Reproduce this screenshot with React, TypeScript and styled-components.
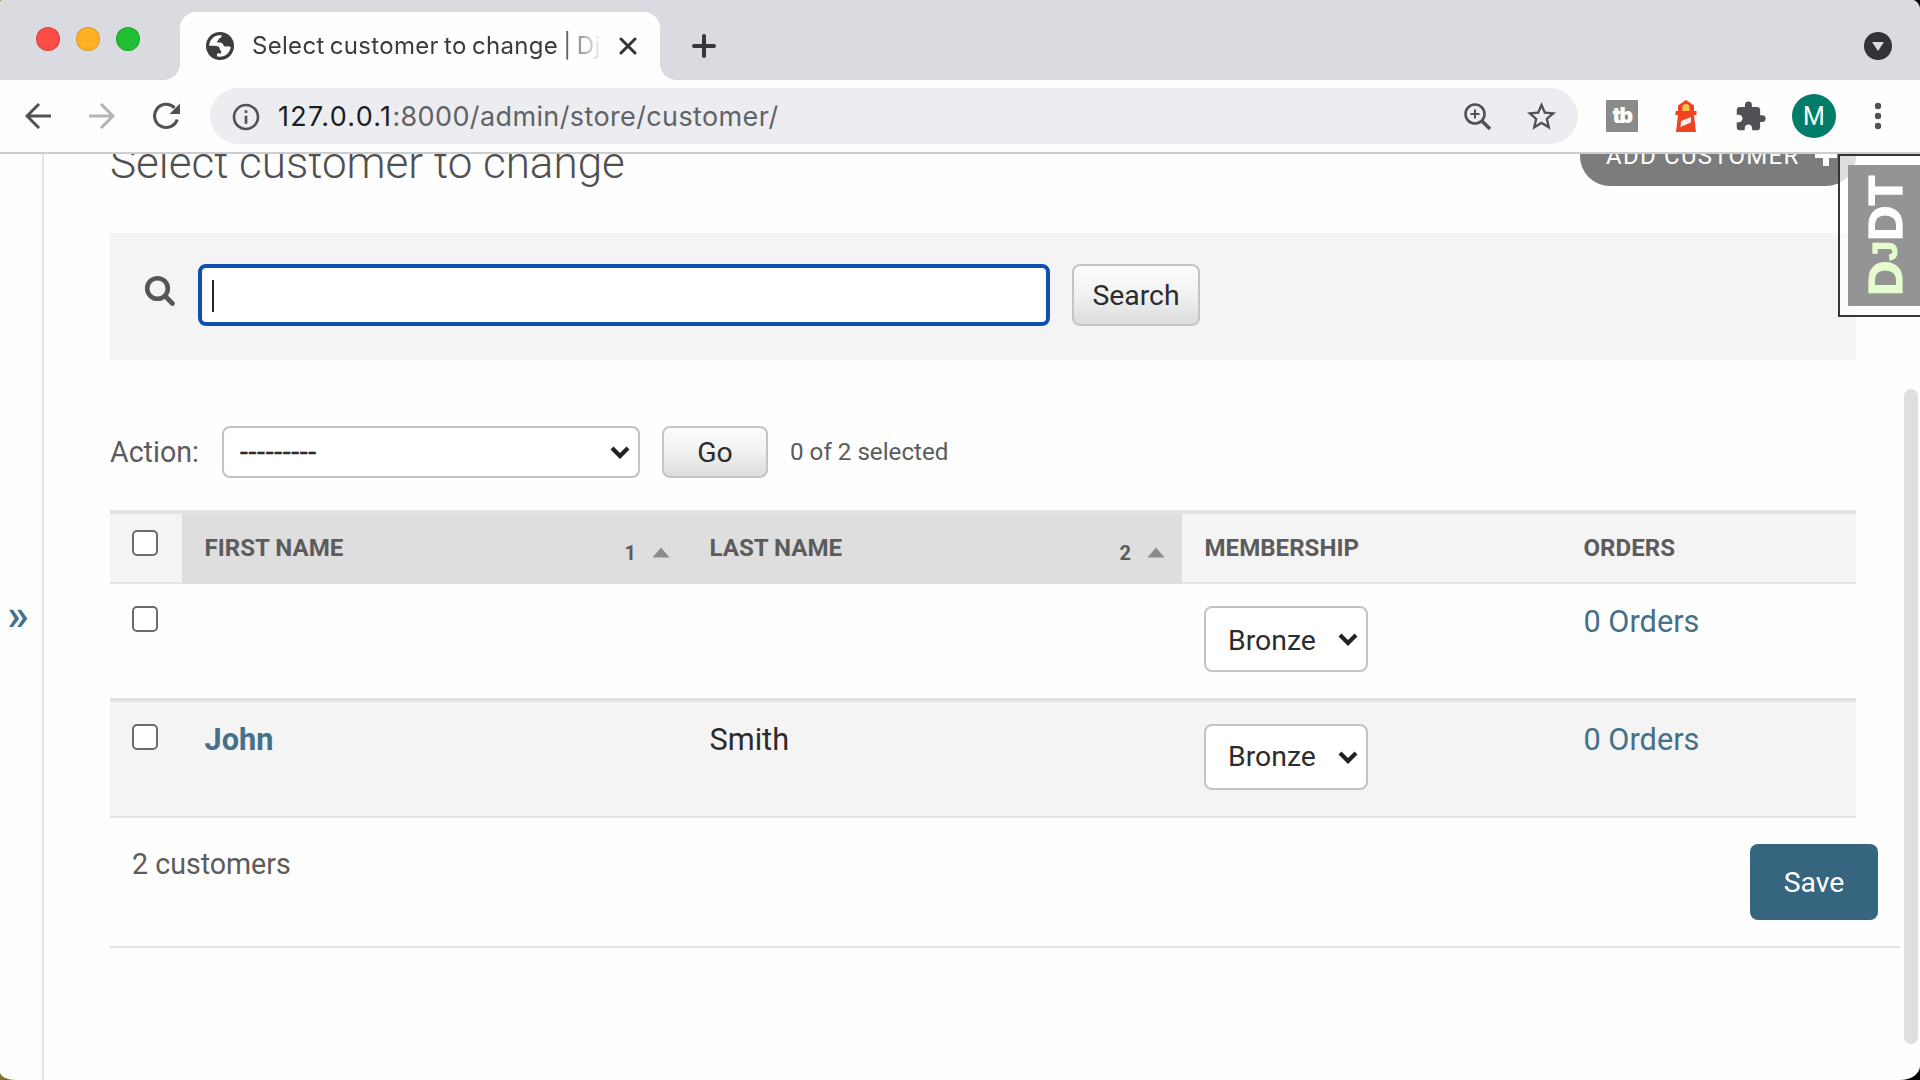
import React from "react";
import styled, { createGlobalStyle, css } from "styled-components";
import { MdExtension, MdInfoOutline, MdStarBorder } from "react-icons/md";

const Global = createGlobalStyle`
  html, body { margin: 0; padding: 0; }
  *, *::before, *::after { box-sizing: border-box; }
  body {
    height: 1080px;
    overflow: hidden;
    background: linear-gradient(90deg, #7b7030 0 50%, #050608 50% 100%);
    font-family: Roboto, "Liberation Sans", sans-serif;
  }
  button, select, input { font-family: inherit; }
`;

const Window = styled.div`
  width: 1920px;
  height: 1080px;
  display: flex;
  flex-direction: column;
  overflow: hidden;
  background: #fefefe;
  border-radius: 3px 8px 20px 16px / 3px 10px 14px 8px;
`;

/* ---------- browser chrome ---------- */

const TabStrip = styled.div`
  height: 80px;
  flex: none;
  display: flex;
  align-items: flex-end;
  background: #dadbe0;
`;

const Lights = styled.div`
  align-self: flex-start;
  display: flex;
  gap: 16px;
  width: 180px;
  padding: 27px 0 0 36px;
`;

const Light = styled.span<{ $color: string }>`
  width: 24px;
  height: 24px;
  border-radius: 50%;
  border: 1px solid rgba(0, 0, 0, 0.14);
  background: ${(p) => p.$color};
`;

const Tab = styled.div`
  position: relative;
  width: 480px;
  height: 68px;
  display: flex;
  align-items: center;
  padding: 0 23px 0 26px;
  border-radius: 16px 16px 0 0;
  background: #fefefe;
  color: #3c3d40;

  &::before,
  &::after {
    content: "";
    position: absolute;
    bottom: 0;
    width: 16px;
    height: 16px;
  }
  &::before {
    left: -16px;
    background: radial-gradient(circle at 0 0, transparent 15.5px, #fefefe 16px);
  }
  &::after {
    right: -16px;
    background: radial-gradient(circle at 100% 0, transparent 15.5px, #fefefe 16px);
  }
`;

const TabTitle = styled.span`
  flex: 1;
  margin-left: 18px;
  margin-right: 15px;
  overflow: hidden;
  white-space: nowrap;
  font: 400 24px/32px Inter, "Liberation Sans", sans-serif;
  letter-spacing: 0.3px;
  word-spacing: -1.8px;
  color: #3a3b3e;
  mask-image: linear-gradient(90deg, #000 calc(100% - 46px), transparent calc(100% - 1px));
`;

const NewTab = styled.div`
  align-self: center;
  margin: 12px auto 0 32px;
  display: flex;
`;

const TabSearch = styled.div`
  align-self: center;
  margin: 12px 28px 0 0;
  display: flex;
`;

const Toolbar = styled.div`
  height: 74px;
  flex: none;
  display: flex;
  align-items: center;
  border-bottom: 2px solid #cdcecf;
  background: #fefefe;
  color: #505256;
`;

const NavButtons = styled.div`
  width: 210px;
  display: flex;
  align-items: center;
  gap: 38px;
  padding-left: 25px;
`;

const AddressBar = styled.div`
  width: 1368px;
  height: 56px;
  display: flex;
  align-items: center;
  padding: 1px 19px 0 20px;
  border-radius: 28px;
  background: #ecedf1;
`;

const Url = styled.span`
  flex: 1;
  margin-left: 16px;
  font: 400 27px/36px Inter, "Liberation Sans", sans-serif;
  letter-spacing: 0.38px;
  color: #606266;
  b {
    font-weight: 400;
    letter-spacing: 1.3px;
    color: #1c1d20;
  }
`;

const AddressIcons = styled.div`
  display: flex;
  align-items: center;
  gap: 32px;
`;

const Extensions = styled.div`
  display: flex;
  align-items: center;
  gap: 37px;
  margin-left: 28px;
`;

const BuddyBadge = styled.span`
  width: 32px;
  height: 32px;
  display: flex;
  align-items: center;
  justify-content: center;
  padding-bottom: 1px;
  background: #8a8a8a;
  color: #fff;
  font: 900 21px/31px Inter, sans-serif;
  letter-spacing: -1.6px;
`;

const Avatar = styled.span`
  width: 44px;
  height: 44px;
  margin: 0 1px 0 -12px;
  border-radius: 50%;
  background: #007c69;
  color: #f2fffc;
  text-align: center;
  font: 400 25px/45px Roboto, sans-serif;
`;

/* ---------- page ---------- */

const Page = styled.div`
  position: relative;
  flex: 1;
  min-height: 0;
  display: flex;
  overflow: hidden;
`;

const NavToggle = styled.div`
  width: 44px;
  flex: none;
  padding: 441px 0 0 7px;
  border-right: 2px solid #e4e4e4;
  color: #44708c;
  font-size: 45px;
  font-weight: 500;
  line-height: 40px;
`;

const Main = styled.main`
  width: 1856px;
  padding-left: 66px;
`;

const TitleRow = styled.div`
  height: 79px;
  display: flex;
  justify-content: space-between;
  width: 1746px;
`;

const Title = styled.h1`
  margin: -17px 0 0;
  height: 52px;
  font-weight: 300;
  font-size: 44px;
  line-height: 52px;
  color: #505050;
  white-space: nowrap;
`;

const AddButton = styled.a`
  width: 276px;
  height: 63px;
  margin-top: -31px;
  display: flex;
  align-items: center;
  padding-left: 26px;
  gap: 16px;
  border-radius: 30px;
  background: #7c7c7c;
  color: #fff;
  font-size: 24px;
  line-height: 28px;
  letter-spacing: 1.25px;
  white-space: nowrap;
  span { margin-top: 2px; }
`;

const SearchPanel = styled.form`
  width: 1746px;
  height: 127px;
  display: flex;
  align-items: flex-start;
  padding: 31px 0 0 34px;
  background: #f4f4f4;
  svg { margin-top: 11px; }
`;

const SearchField = styled.div`
  width: 852px;
  height: 62px;
  margin-left: 22px;
  padding: 12px 0 0 10px;
  border: 4px solid #0d50b2;
  border-radius: 8px;
  background: #fff;
`;

const Caret = styled.span`
  display: block;
  width: 2px;
  height: 32px;
  background: #222;
`;

const Button = styled.button<{ $w: number; $h: number }>`
  width: ${(p) => p.$w}px;
  height: ${(p) => p.$h}px;
  margin: 0 0 0 22px;
  padding: 1px 0 0;
  border: 2px solid #c4c4c4;
  border-radius: 8px;
  background: linear-gradient(#fcfcfc, #f3f3f3 45%, #dcdcdc);
  color: #2c2c2c;
  font-size: 28.4px;
  line-height: 34px;
`;

const Actions = styled.div`
  height: 52px;
  margin-top: 66px;
  display: flex;
  align-items: center;
  color: #5c5c5c;
  font-size: 28.6px;
`;

const ActionLabel = styled.label`
  width: 112px;
`;

const Select = styled.div<{ $w: number; $h: number; $inline?: boolean }>`
  width: ${(p) => p.$w}px;
  height: ${(p) => p.$h}px;
  display: flex;
  align-items: center;
  justify-content: space-between;
  padding: ${(p) => (p.$inline ? "0 8px 0 22px" : "0 8px 0 16px")};
  border: 2px solid #c3c3c3;
  border-radius: 8px;
  background: #fff;
  color: #2c2c2c;
  font-size: 28.4px;
  line-height: 32px;
`;

const Dashes = styled.span`
  letter-spacing: 0.7px;
  -webkit-text-stroke: 0.5px currentColor;
`;

const Counter = styled.span`
  margin-left: 22px;
  font-size: 24.2px;
`;

const Table = styled.div`
  width: 1746px;
  margin-top: 32px;
`;

const columns = css`
  display: grid;
  grid-template-columns: 72px 505px 495px 379px 295px;
`;

const HeadRow = styled.div`
  ${columns};
  height: 74px;
  border-top: 4px solid #e2e2e2;
  border-bottom: 2px solid #e4e4e4;
  background: #f4f4f4;
`;

const HeadCell = styled.div<{ $sorted?: boolean }>`
  display: flex;
  justify-content: space-between;
  padding: 18px 17px 0 22.5px;
  margin-bottom: ${(p) => (p.$sorted ? "-2px" : 0)};
  background: ${(p) => (p.$sorted ? "#dedede" : "transparent")};
  color: #5c5c5c;
  font-weight: 700;
  font-size: 24.1px;
  line-height: 32px;
`;

const SortInfo = styled.span`
  display: flex;
  align-items: center;
  gap: 16px;
  height: 24px;
  margin-top: 9px;
  font-size: 20px;
  svg { margin-bottom: 1px; }
`;

const Row = styled.div<{ $alt?: boolean }>`
  ${columns};
  height: ${(p) => (p.$alt ? 120 : 114)}px;
  border-top: ${(p) => (p.$alt ? "4px solid #e3e3e3" : "0")};
  border-bottom: ${(p) => (p.$alt ? "2px solid #e4e4e4" : "0")};
  background: ${(p) => (p.$alt ? "#f4f4f4" : "transparent")};
`;

const Cell = styled.div<{ $link?: boolean; $bold?: boolean; $flush?: boolean }>`
  padding: 22px 0 0 ${(p) => (p.$flush ? 22 : 22.5)}px;
  color: ${(p) => (p.$link ? "#447089" : "#2c2c2c")};
  font-size: 30.7px;
  line-height: 32px;
  font-weight: ${(p) => (p.$bold ? 700 : 400)};
`;

const Membership = styled.span<{ $drop?: boolean }>`
  padding-top: ${(p) => (p.$drop ? 3 : 0)}px;
`;

const Checkbox = styled.span`
  display: block;
  flex: none;
  width: 26px;
  height: 26px;
  border: 2px solid #6b6b6b;
  border-radius: 5px;
  background: #fff;
`;

const CheckHead = styled.div`
  padding: 16px 0 0 22px;
`;

const Footer = styled.div`
  width: 1790px;
  height: 130px;
  display: flex;
  justify-content: space-between;
  align-items: flex-start;
  padding: 26px 22px 0;
  border-bottom: 2px solid #e2e2e2;
  color: #5c5c5c;
  font-size: 28.6px;
`;

const Total = styled.span`
  margin-top: 3px;
  line-height: 34px;
`;

const Save = styled.button`
  width: 128px;
  height: 76px;
  padding: 1px 0 0;
  border: 0;
  border-radius: 8px;
  background: #36667f;
  color: #fff;
  font-size: 28.4px;
  line-height: 34px;
`;

const DebugHandle = styled.div`
  position: absolute;
  top: 0;
  right: -2px;
  width: 84px;
  height: 163px;
  padding: 9px 0 9px 8px;
  border: 2px solid rgba(20, 20, 20, 0.85);
  background: rgba(255, 255, 255, 0.75);
`;

const DebugLabel = styled.div`
  height: 141px;
  display: flex;
  align-items: center;
  justify-content: center;
  background: #949494;
  writing-mode: vertical-rl;
  transform: rotate(180deg);
  color: #fff;
  font: 700 49px/74px "Liberation Sans", Arial, sans-serif;
  padding-left: 6px;
  -webkit-text-stroke: 1.2px currentColor;
  span { color: #e6fbce; }
  small { font-size: 35px; }
`;

const Scrollbar = styled.div`
  position: absolute;
  top: 235px;
  right: 2px;
  width: 14px;
  height: 655px;
  border-radius: 7px;
  background: #dfdfdf;
`;

const Chevron = () => (
  <svg width="20" height="13" viewBox="0 0 20 13" fill="none" stroke="#222" strokeWidth="4.2">
    <path d="M2 2 L10 10 L18 2" />
  </svg>
);

const SortArrow = () => (
  <svg width="18" height="11" viewBox="0 0 18 11">
    <path d="M9 0.5 L17.5 10.5 H0.5 Z" fill="#8b8b8b" />
  </svg>
);

const Arrow = ({ flip, color }: { flip?: boolean; color: string }) => (
  <svg width="26" height="26" viewBox="0 0 26 26" fill="none" stroke={color} strokeWidth="3"
    transform={flip ? "scale(-1 1)" : undefined}>
    <path d="M26 13 H2 M14 1 L2 13 L14 25" />
  </svg>
);

const Globe = () => (
  <svg width="28" height="28" viewBox="0 0 28 28">
    <circle cx="14" cy="14" r="14" fill="#3c3d40" />
    <path
      d="M3.2 13.8 C3.2 8 8 3.2 13.8 3.2 L15.6 3.3 C15.8 5 15.2 6 13.6 6.2 C12.4 6.4 12.6 8.8 11.2 9.2 C10.4 9.6 11.2 10.8 12.6 10.6 C15 10.4 16.6 11 17.2 12.6 C17.8 14.6 19 14.8 20.6 14.4 C22 14 23.4 14.2 24.8 15 C24 20.5 19.6 24.8 13.8 24.8 L11 24.4 V21.6 H14.2 C15.6 21.4 15.6 19.4 14.4 18.2 C13 17 14.4 15.2 12 14.4 C10 13.8 6 14.2 3.2 13.8 Z"
      fill="#fefefe"
    />
  </svg>
);

const Lighthouse = () => (
  <svg width="22" height="32" viewBox="0 0 22 32">
    <path d="M11 0 L19 5.5 V11 H21.5 V15 H19 L21 32 H1 L3 15 H0.5 V11 H3 V5.5 Z" fill="#ee4422" />
    <path d="M7.5 11 V7.5 A3.5 3.5 0 0 1 14.5 7.5 V11 Z" fill="#fdc04f" />
    <path d="M6 21 L16 17 V22.5 L5.5 27 Z" fill="#f7e9e6" />
  </svg>
);

const customers = [
  { first: "", last: "" },
  { first: "John", last: "Smith" },
];

export default function App() {
  return (
    <Window>
      <Global />
      <TabStrip>
        <Lights>
          <Light $color="#fc4c48" />
          <Light $color="#fdb024" />
          <Light $color="#1fbe33" />
        </Lights>
        <Tab>
          <Globe />
          <TabTitle>Select customer to change | Django site admin</TabTitle>
          <svg width="18" height="18" viewBox="0 0 18 18" stroke="#333438" strokeWidth="3" strokeLinecap="round">
            <path d="M2 2 L16 16 M16 2 L2 16" />
          </svg>
        </Tab>
        <NewTab>
          <svg width="24" height="24" viewBox="0 0 24 24" stroke="#36373b" strokeWidth="4" strokeLinecap="round">
            <path d="M12 2 V22 M2 12 H22" />
          </svg>
        </NewTab>
        <TabSearch>
          <svg width="28" height="28" viewBox="0 0 28 28">
            <circle cx="14" cy="14" r="14" fill="#323338" />
            <path d="M8 10 H20 L14 19 Z" fill="#dadbe0" />
          </svg>
        </TabSearch>
      </TabStrip>

      <Toolbar>
        <NavButtons>
          <Arrow color="#505256" />
          <Arrow color="#b3b4b6" flip />
          <svg width="28" height="28" viewBox="0 0 28 28" fill="none">
            <path d="M24.2 17.5 A11.6 11.6 0 1 1 21.5 5.8" stroke="#505256" strokeWidth="3.1" />
            <path d="M27 1.5 V12 H16.5 Z" fill="#505256" />
          </svg>
        </NavButtons>
        <AddressBar>
          <MdInfoOutline size={32} />
          <Url><b>127.0.0.1</b>:8000/admin/store/customer/</Url>
          <AddressIcons>
            <svg width="28" height="28" viewBox="0 0 28 28" fill="none" stroke="#505256">
              <circle cx="11" cy="11" r="9.5" strokeWidth="2.6" />
              <path d="M18 18 L26 26" strokeWidth="3.6" />
              <path d="M11 6.5 V15.5 M6.5 11 H15.5" strokeWidth="2" />
            </svg>
            <MdStarBorder size={35} />
          </AddressIcons>
        </AddressBar>
        <Extensions>
          <BuddyBadge>tb</BuddyBadge>
          <Lighthouse />
          <MdExtension size={33} />
          <Avatar>M</Avatar>
          <svg width="8" height="28" viewBox="0 0 8 28" fill="#505256">
            <circle cx="4" cy="4" r="3.2" />
            <circle cx="4" cy="14" r="3.2" />
            <circle cx="4" cy="24" r="3.2" />
          </svg>
        </Extensions>
      </Toolbar>

      <Page>
        <NavToggle>»</NavToggle>
        <Main>
          <TitleRow>
            <Title>Select customer to change</Title>
            <AddButton>
              <span>ADD CUSTOMER</span>
              <svg width="22" height="22" viewBox="0 0 22 22" stroke="#fff" strokeWidth="6">
                <path d="M11 0 V22 M0 11 H22" />
              </svg>
            </AddButton>
          </TitleRow>
          <SearchPanel>
            <svg width="32" height="32" viewBox="0 0 32 32" fill="none" stroke="#565656" strokeLinecap="round">
              <circle cx="13.5" cy="13.5" r="10.3" strokeWidth="4.6" />
              <path d="M21.5 21.5 L28.5 28.5" strokeWidth="4.6" />
            </svg>
            <SearchField><Caret /></SearchField>
            <Button type="button" $w={128} $h={62}>Search</Button>
          </SearchPanel>
          <Actions>
            <ActionLabel>Action:</ActionLabel>
            <Select $w={418} $h={52}><Dashes>---------</Dashes><Chevron /></Select>
            <Button type="button" $w={106} $h={52}>Go</Button>
            <Counter>0 of 2 selected</Counter>
          </Actions>
          <Table>
            <HeadRow>
              <CheckHead><Checkbox /></CheckHead>
              <HeadCell $sorted>FIRST NAME<SortInfo>1<SortArrow /></SortInfo></HeadCell>
              <HeadCell $sorted>LAST NAME<SortInfo>2<SortArrow /></SortInfo></HeadCell>
              <HeadCell>MEMBERSHIP</HeadCell>
              <HeadCell>ORDERS</HeadCell>
            </HeadRow>
            {customers.map((c, i) => (
              <Row key={i} $alt={i % 2 === 1}>
                <Cell $flush><Checkbox /></Cell>
                <Cell $link $bold>{c.first}</Cell>
                <Cell>{c.last}</Cell>
                <Cell $flush>
                  <Select $w={164} $h={66} $inline>
                    <Membership $drop={i === 0}>Bronze</Membership>
                    <Chevron />
                  </Select>
                </Cell>
                <Cell $link>0 Orders</Cell>
              </Row>
            ))}
          </Table>
          <Footer>
            <Total>2 customers</Total>
            <Save type="button">Save</Save>
          </Footer>
        </Main>
        <DebugHandle>
          <DebugLabel><span>D<small>J</small></span>DT</DebugLabel>
        </DebugHandle>
        <Scrollbar />
      </Page>
    </Window>
  );
}
